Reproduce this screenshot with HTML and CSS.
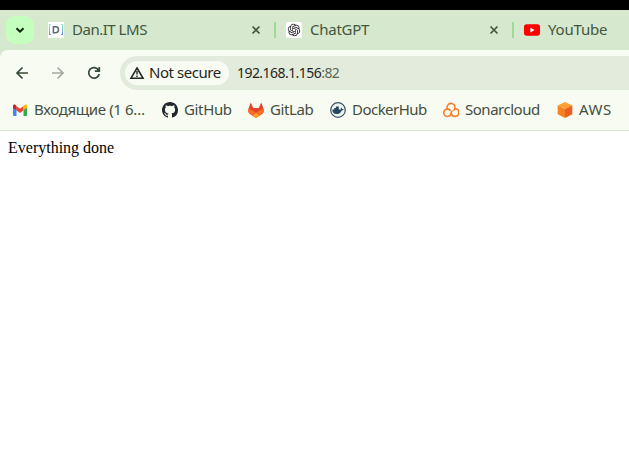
FILE: index.html
```html
<!DOCTYPE html>
<html lang="en">
<head>
<meta charset="utf-8">
<title>192.168.1.156:82</title>
<link rel="stylesheet" href="styles.css">
</head>
<body>
<header class="tabstrip">
  <button class="tab-search" aria-label="Search tabs"><svg width="28" height="28" viewBox="0 0 28 28"><path d="M10.5 12.3 14 15.7l3.5-3.4" fill="none" stroke="#10200f" stroke-width="2"/></svg></button>
  <div class="tab first">
    <svg class="icon" viewBox="0 0 16 16"><defs><linearGradient id="bracket" x2="0" y2="1"><stop stop-color="#8df0c5"/><stop offset="1" stop-color="#6e8ef5"/></linearGradient></defs><path fill="#fff" d="M0 0h16v16H0z"/><path d="M3 2.5H1.5v10H3M13 2.5h1.5v10H13" fill="none" stroke="url(#bracket)" stroke-width="1.1"/><path d="M5.4 4.7h2.1c4 0 4 6 0 6H5.4z" fill="none" stroke="#626776" stroke-width="1.5"/></svg>
    <span class="tab-title dan">Dan.IT LMS</span>
    <svg class="close" viewBox="0 0 10 10"><path d="m1.5 1.5 7 7m0-7-7 7"/></svg>
  </div>
  <div class="tab">
    <svg class="icon" viewBox="0 0 16 16"><rect width="16" height="16" rx="2" fill="#fff"/><path transform="translate(1.8 1.8) scale(.517)" fill="#222" d="M22.2819 9.8211a5.9847 5.9847 0 0 0-.5157-4.9108 6.0462 6.0462 0 0 0-6.5098-2.9A6.0651 6.0651 0 0 0 4.9807 4.1818a5.9847 5.9847 0 0 0-3.9977 2.9 6.0462 6.0462 0 0 0 .7427 7.0966 5.98 5.98 0 0 0 .511 4.9107 6.051 6.051 0 0 0 6.5146 2.9001A5.9847 5.9847 0 0 0 13.2599 24a6.0557 6.0557 0 0 0 5.7718-4.2058 5.9894 5.9894 0 0 0 3.9977-2.9001 6.0557 6.0557 0 0 0-.7475-7.073zm-9.022 12.6081a4.4755 4.4755 0 0 1-2.8764-1.0408l.1419-.0804 4.7783-2.7582a.7948.7948 0 0 0 .3927-.6813v-6.7369l2.02 1.1686a.071.071 0 0 1 .038.052v5.5826a4.504 4.504 0 0 1-4.4945 4.4944zm-9.6607-4.1254a4.4708 4.4708 0 0 1-.5346-3.0137l.142.0852 4.783 2.7582a.7712.7712 0 0 0 .7806 0l5.8428-3.3685v2.3324a.0804.0804 0 0 1-.0332.0615L9.74 19.9502a4.4992 4.4992 0 0 1-6.1408-1.6464zM2.3408 7.8956a4.485 4.485 0 0 1 2.3655-1.9728V11.6a.7664.7664 0 0 0 .3879.6765l5.8144 3.3543-2.0201 1.1685a.0757.0757 0 0 1-.071 0l-4.8303-2.7865A4.504 4.504 0 0 1 2.3408 7.872zm16.5963 3.8558L13.1038 8.364 15.1192 7.2a.0757.0757 0 0 1 .071 0l4.8303 2.7913a4.4944 4.4944 0 0 1-.6765 8.1042v-5.6772a.79.79 0 0 0-.407-.667zm2.0107-3.0231l-.142-.0852-4.7735-2.7818a.7759.7759 0 0 0-.7854 0L9.409 9.2297V6.8974a.0662.0662 0 0 1 .0284-.0615l4.8303-2.7866a4.4992 4.4992 0 0 1 6.6802 4.66zM8.3065 12.863l-2.02-1.1638a.0804.0804 0 0 1-.038-.0567V6.0742a4.4992 4.4992 0 0 1 7.3757-3.4537l-.142.0805L8.704 5.459a.7948.7948 0 0 0-.3927.6813zm1.0976-2.3654l2.602-1.4998 2.6069 1.4998v2.9994l-2.5974 1.4997-2.6067-1.4997Z"/></svg>
    <span class="tab-title gpt">ChatGPT</span>
    <svg class="close" viewBox="0 0 10 10"><path d="m1.5 1.5 7 7m0-7-7 7"/></svg>
  </div>
  <div class="tab last">
    <svg class="icon" viewBox="0 0 16 16"><rect y="2.3" width="16" height="11.5" rx="2.7" fill="red"/><path d="m6.4 5.7 4.2 2.4-4.2 2.4z" fill="#fff"/></svg>
    <span class="tab-title yt">YouTube</span>
  </div>
</header>
<div class="chrome">
  <nav class="toolbar">
    <svg class="nav" viewBox="0 0 16 16"><path d="M14 8H3m5.5-5.5L3 8l5.5 5.5" stroke="#364b36"/></svg>
    <svg class="nav" viewBox="0 0 16 16"><path d="M2 8h11M7.500 2.500 13 8l-5.500 5.500" stroke="#a2aaa0"/></svg>
    <svg class="nav" viewBox="0 0 16 16"><path d="M12.6 5.200A5.300 5.300 0 1 0 13.200 9M13.300 2v4.200H8.800" stroke="#364b36"/></svg>
    <div class="address">
      <div class="security"><svg width="16" height="16" viewBox="0 0 16 16"><path d="M8 3 14 13.200H2z" fill="none" stroke="#20291f" stroke-width="1.600"/><path d="M8 6v3.600m0 1v1.500" stroke="#20291f" stroke-width="1.400"/></svg><span class="insecure">Not secure</span></div>
      <span class="url">192.168.1.156<span class="port">:82</span></span>
    </div>
  </nav>
  <nav class="bookmarks">
    <a class="bookmark mail"><svg class="icon" viewBox="0 0 16 16"><path d="M1 4.500 4.500 7v7H2a1 1 0 0 1-1-1z" fill="#4285f4"/><path d="M11.500 7 15 4.500V13a1 1 0 0 1-1 1h-2.500z" fill="#34a853"/><path d="M4.500 4 8 6.800 11.500 4v4.300L8 11 4.500 8.300z" fill="#ea4335"/><path d="M1 4.300C1 2 3 1.800 4.500 4v4.300L1 5.800z" fill="#c5221f"/><path d="M11.500 4C13 1.800 15 2 15 4.300v1.500l-3.500 2.500z" fill="#fbbc04"/></svg><span>Входящие (1 6…</span></a>
    <a class="bookmark github"><svg class="icon" viewBox="0 0 16 16"><path fill="#22262d" d="M8 0C3.580 0 0 3.580 0 8c0 3.540 2.290 6.530 5.470 7.590.4.070.55-.17.55-.38 0-.19-.01-.82-.01-1.490-2.010.37-2.530-.49-2.690-.94-.09-.23-.48-.94-.82-1.130-.28-.15-.68-.52-.01-.53.63-.01 1.080.58 1.230.82.72 1.210 1.870.87 2.330.66.07-.52.28-.87.51-1.070-1.780-.2-3.640-.89-3.640-3.950 0-.87.31-1.590.82-2.150-.08-.2-.36-1.020.08-2.120 0 0 .67-.21 2.200.82.64-.18 1.320-.27 2-.27s1.360.09 2 .27c1.530-1.040 2.200-.82 2.200-.82.44 1.100.16 1.920.08 2.120.51.56.82 1.270.82 2.150 0 3.070-1.870 3.750-3.650 3.950.29.25.54.73.54 1.480 0 1.070-.01 1.930-.01 2.200 0 .21.15.46.55.38A8 8 0 0 0 16 8c0-4.420-3.580-8-8-8z"/></svg><span>GitHub</span></a>
    <a class="bookmark gitlab"><svg class="icon" viewBox="0 0 16 16"><path d="m2.800.5 2.400 5.600h5.600L13.200.5 15.600 7q1 3-1.500 4.900L8 16l-6.100-4.100Q-.600 10 .400 7z" fill="#e24329"/><path d="M15.600 7q1 3-1.500 4.900L8 16l-6.100-4.100Q-.600 10 .400 7 3 7.100 5 8.700l3 2.300 3-2.300Q13 7.100 15.600 7z" fill="#fc6d26"/><path d="m8 11 3.300 2.700L8 16l-3.300-2.300z" fill="#fca326"/></svg><span>GitLab</span></a>
    <a class="bookmark docker"><svg class="icon" viewBox="0 0 16 16"><circle cx="8" cy="8" r="7.300" fill="#edf3ef" stroke="#365268" stroke-width="1.200"/><path d="M2.300 7.500h1.900V6H6V4.500h2.800v3h2.100q-.300-1.200.3-2 .9.700.8 1.500.9-.200 1.700.2-.6 1.200-2 1.200c-.9 2.400-2.700 3.600-5.300 3.600-2.700 0-4.200-2-4.100-4.500z" fill="#26485f"/></svg><span>DockerHub</span></a>
    <a class="bookmark sonar"><svg class="icon" viewBox="0 0 16 16"><g fill="none" stroke="#fb7a26" stroke-width="1.600" stroke-linecap="round"><path d="M4.100 6.200A4 4 0 1 1 11 8.100"/><path d="M8.100 11.200A3.700 3.700 0 1 1 4.500 7.100q1.500 0 2.500 1"/><path d="M12.200 6.700a3.850 3.850 0 1 1-4 4.400q0-1.200.7-2.100"/></g></svg><span>Sonarcloud</span></a>
    <a class="bookmark aws"><svg class="icon" viewBox="0 0 16 16"><path d="m8 0 7.300 3.500L8 7 .7 3.500z" fill="#ff9d2d"/><path d="M.7 3.500 8 7v9L.700 12.300z" fill="#f58220"/><path d="M15.300 3.500 8 7v9l7.300-3.700z" fill="#e95f20"/></svg><span>AWS</span></a>
  </nav>
</div>
<main>Everything done</main>
</body>
</html>
```
FILE: styles.css
```css
* { box-sizing: border-box; }
body { margin: 0; padding-top: 10px; width: 629px; height: 450px; overflow: hidden; background: linear-gradient(#000 10px, #d6e8cd 10px, #d6e8cd 60px, #fff 60px); font: 15px/20px "Noto Sans", sans-serif; }
.tabstrip { display: flex; align-items: center; height: 40px; padding-left: 6px; color: #42573f; }
.tab-search { width: 28px; height: 28px; padding: 0; border: 0; border-radius: 9px; background: #c5ffbd; flex: none; }
.tab-search svg { display: block; }
.icon { width: 16px; height: 16px; flex: none; display: block; }
.tab { display: flex; align-items: center; width: 238px; height: 16px; padding-left: 10px; border-left: 2px solid #9ed998; flex: none; }
.tab.first { width: 240px; padding-left: 12px; border-color: transparent; }
.tab.last { width: auto; flex: 1; }
.tab-title { margin-top: -2px; margin-left: 8px; white-space: nowrap; }
.dan { letter-spacing: -.48px; }
.gpt { letter-spacing: -.25px; }
.yt { letter-spacing: -.2px; }
.close { width: 10px; height: 10px; margin-left: auto; margin-right: 13px; }
.close path { fill: none; stroke: #42573f; stroke-width: 1.7; }
.chrome { height: 81px; background: #f8fbf2; border-top-left-radius: 8px; border-bottom: 1px solid #dbe1d4; }
.toolbar { display: flex; align-items: center; height: 46px; padding-left: 14px; gap: 20px; }
.nav { width: 16px; height: 16px; flex: none; }
.nav path { fill: none; stroke-width: 1.7; }
.address { display: flex; align-items: center; flex: 1; height: 34px; margin-left: -2px; padding-left: 5px; border-radius: 17px 0 0 17px; background: #e3ecdc; color: #1e261c; }
.security { display: flex; align-items: center; width: 104px; height: 24px; padding-left: 4px; border-radius: 12px; background: #f8fbf2; }
.security span { margin-top: -2px; margin-left: 4px; white-space: nowrap; letter-spacing: -.45px; }
.url { margin-left: 8px; font-size: 14px; white-space: nowrap; letter-spacing: -.55px; }
.port { color: #5c6659; }
.bookmarks { display: flex; align-items: center; height: 28px; padding-left: 12px; color: #444e41; }
.bookmark { display: flex; align-items: center; gap: 6px; white-space: nowrap; flex: none; }
.bookmark span { margin-top: -2px; }
.mail { width: 150px; letter-spacing: -.36px; }
.github { width: 86px; letter-spacing: -.35px; }
.gitlab { width: 82px; letter-spacing: -.38px; }
.docker { width: 113px; letter-spacing: -.53px; }
.sonar { width: 114px; letter-spacing: -.48px; }
.aws { letter-spacing: .5px; }
main { padding: 7px 8px; font: 16px/20px "Liberation Serif", serif; color: #000; }
```
